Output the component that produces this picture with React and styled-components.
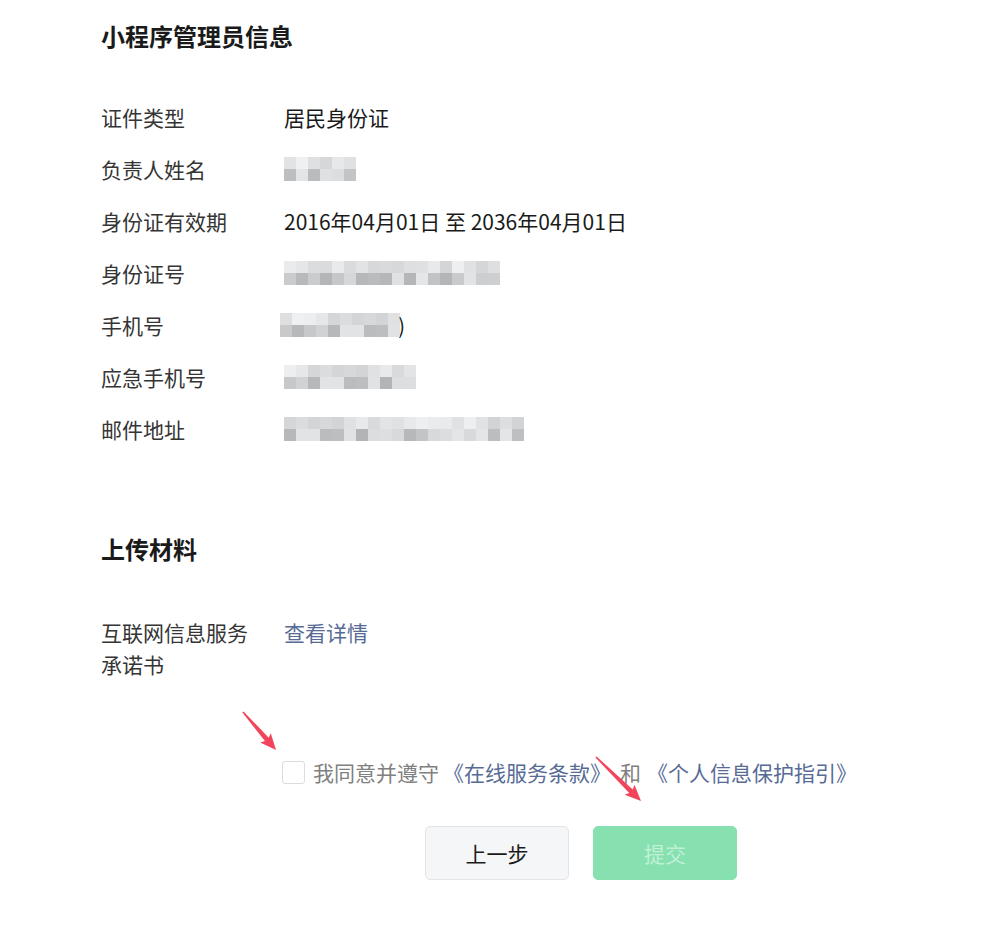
import styled, { createGlobalStyle } from 'styled-components';

const GlobalStyle = createGlobalStyle`
  body {
    margin: 0;
    background: #ffffff;
    font-family: "Noto Sans CJK SC", "Noto Sans", sans-serif;
    color: #1a1a1a;
  }
`;

const Page = styled.div`
  position: relative;
  width: 1006px;
  min-height: 927px;
  padding: 20px 0 0 101px;
  box-sizing: border-box;
`;

const SectionTitle = styled.h2`
  margin: 0 0 ${({ $gap }) => $gap}px;
  font-size: 24px;
  line-height: 32px;
  font-weight: 700;
  color: #1a1a1a;
`;

const InfoList = styled.div`
  display: flex;
  flex-direction: column;
  gap: 20px;
  margin-bottom: ${({ $gap }) => $gap}px;
`;

const Row = styled.div`
  display: flex;
  align-items: flex-start;
  font-size: 21px;
  line-height: 32px;
`;

const Label = styled.div`
  width: 150px;
  margin-right: 33px;
  color: #353535;
  flex-shrink: 0;
`;

const Value = styled.div`
  color: #1a1a1a;
  display: flex;
  align-items: center;
  min-height: 32px;
`;

const Link = styled.a`
  color: #576b95;
  text-decoration: none;
  cursor: pointer;
`;

const MosaicGrid = styled.div`
  display: grid;
  grid-template-columns: repeat(${({ $cols }) => $cols}, 12px);
  grid-auto-rows: ${({ $h }) => $h}px;
  margin-left: ${({ $shift }) => $shift || 0}px;
`;

const Cell = styled.span`
  display: block;
`;

const Tail = styled.span`
  margin-left: -2px;
  color: #1a1a1a;
`;

const Agreement = styled.div`
  display: flex;
  align-items: center;
  margin: 76px 0 0 181px;
  font-size: 21px;
  line-height: 32px;
  color: #808080;
`;

const Check = styled.span`
  width: 21px;
  height: 21px;
  border: 1px solid #dcdcdc;
  border-radius: 3px;
  background: #fff;
  margin-right: 8px;
`;

const Space = styled.span`
  margin: 0 ${({ $r }) => $r}px 0 ${({ $l }) => $l}px;
`;

const Actions = styled.div`
  display: flex;
  gap: 24px;
  margin: 38px 0 0 324px;
`;

const Button = styled.button`
  width: 144px;
  height: 54px;
  border-radius: 5px;
  font-family: inherit;
  font-size: 21px;
  border: 1px solid ${({ $primary }) => ($primary ? '#86e0b0' : '#e2e4e7')};
  background: ${({ $primary }) => ($primary ? '#86e0b0' : '#f5f6f7')};
  color: ${({ $primary }) => ($primary ? '#c0f0d6' : '#1a1a1a')};
  cursor: pointer;
`;

const Arrow = styled.svg`
  position: absolute;
  left: ${({ $x }) => $x}px;
  top: ${({ $y }) => $y}px;
  overflow: visible;
`;

function gray(seed) {
  const v = Math.floor(((Math.sin(seed * 12.9898) * 43758.5453) % 1 + 1) % 1 * 60);
  const base = 165 + v;
  return `rgb(${base},${base + 2},${base + 4})`;
}

const Mosaic = ({ cols, seed, h = 12, shift }) => {
  const cells = [];
  for (let r = 0; r < 2; r++) {
    for (let c = 0; c < cols; c++) {
      const g = gray(seed + r * 31 + c * 7);
      cells.push(
        <Cell key={`${r}-${c}`} style={{ background: g, opacity: r === 0 ? 0.5 : 0.85 }} />
      );
    }
  }
  return (
    <MosaicGrid $cols={cols} $h={h} $shift={shift}>
      {cells}
    </MosaicGrid>
  );
};

const RedArrow = ({ x, y, dx, dy }) => {
  const len = Math.hypot(dx, dy);
  const ang = (Math.atan2(dy, dx) * 180) / Math.PI;
  return (
    <Arrow $x={x} $y={y} width="1" height="1">
      <g transform={`rotate(${ang})`}>
        <polygon
          points={`0,-0.8 ${len - 14},-2.5 ${len - 16},-7 ${len},0 ${len - 16},7 ${len - 14},2.5 0,0.8`}
          fill="#f2455c"
        />
      </g>
    </Arrow>
  );
};

const rows = [
  { label: '证件类型', value: '居民身份证' },
  { label: '负责人姓名', mosaic: { cols: 6, seed: 3 } },
  { label: '身份证有效期', value: '2016年04月01日 至 2036年04月01日' },
  { label: '身份证号', mosaic: { cols: 18, seed: 11 } },
  { label: '手机号', mosaic: { cols: 10, seed: 23, shift: -4 }, tail: ')' },
  { label: '应急手机号', mosaic: { cols: 11, seed: 37 } },
  { label: '邮件地址', mosaic: { cols: 20, seed: 51 } },
];

const App = () => {
  return (
    <>
      <GlobalStyle />
      <Page>
        <SectionTitle $gap={49}>小程序管理员信息</SectionTitle>
        <InfoList $gap={88}>
          {rows.map((row) => (
            <Row key={row.label}>
              <Label>{row.label}</Label>
              <Value>
                {row.value}
                {row.mosaic && <Mosaic {...row.mosaic} />}
                {row.tail && <Tail>{row.tail}</Tail>}
              </Value>
            </Row>
          ))}
        </InfoList>

        <SectionTitle $gap={51}>上传材料</SectionTitle>
        <Row>
          <Label>互联网信息服务承诺书</Label>
          <Value>
            <Link>查看详情</Link>
          </Value>
        </Row>

        <Agreement>
          <Check />
          我同意并遵守
          <Space $l={4} $r={9}>
            <Link>《在线服务条款》</Link>
          </Space>
          和
          <Space $l={6} $r={0}>
            <Link>《个人信息保护指引》</Link>
          </Space>
        </Agreement>

        <Actions>
          <Button>上一步</Button>
          <Button $primary>提交</Button>
        </Actions>

        <RedArrow x={243} y={712} dx={33} dy={38} />
        <RedArrow x={596} y={757} dx={45} dy={44} />
      </Page>
    </>
  );
};

export default App;
